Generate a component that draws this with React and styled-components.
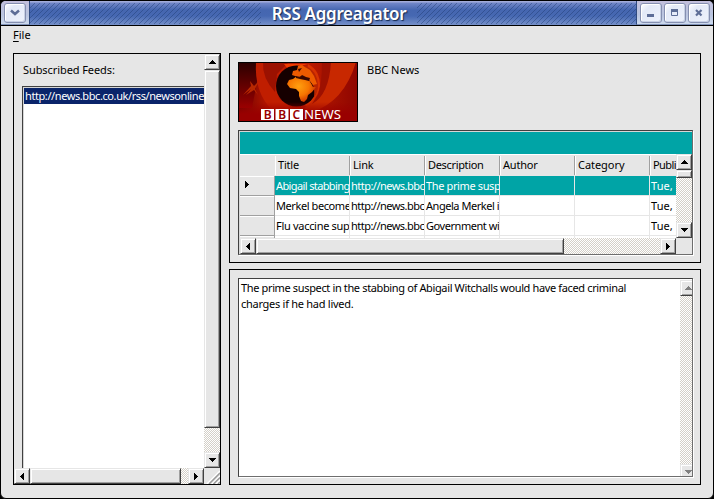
import React from 'react';
import styled, { createGlobalStyle, css } from 'styled-components';

const Global = createGlobalStyle`
  * { box-sizing: border-box; }
  body { margin: 0; background: #000; font: 11px/16px "Noto Sans", "Open Sans", sans-serif; color: #000; }
`;

const Window = styled.div`
  width: 714px; height: 499px; display: flex; flex-direction: column;
  background: #e6e6e6; border: 1px solid #000; border-radius: 6px; overflow: hidden;
`;
const TitleBar = styled.header`
  height: 25px; flex: none; display: flex; border-bottom: 1px solid #000;
  background: linear-gradient(#a3acd9 0 1px, #7186c8 2px, #4566b0 9px, #4668b2 15px, #7590c9 24px);
`;
const Stripe = styled.div`
  flex: ${p => (p.$w ? `0 0 ${p.$w}px` : 1)}; margin: 2px 0 1px;
  background: linear-gradient(135deg, #1d397070 0 10%, #0000 10% 50%, #1d397070 50% 60%, #0000 60%) 0 0 / 5px 5px;
`;
const TitleLabel = styled.h1`
  flex: none; margin: 0; width: 156px; text-align: center; color: #fff; white-space: nowrap;
  font: 600 17px/25px "Noto Sans", sans-serif; letter-spacing: -0.3px;
  text-shadow: 1px 1px 1px #14284f;
`;
const ButtonGroup = styled.div`
  display: flex; align-items: center; gap: 2px; height: 24px; flex: none;
  width: ${p => p.$w}px; padding-left: 3px; border-bottom: 1px solid #7f91b8;
  background: linear-gradient(#c3bfdc, #b9c4df 60%, #ccd9ed);
  ${p => (p.$right ? 'border-left' : 'border-right')}: 1px solid #2f4a80;
`;
const WinButton = styled.button`
  width: 22px; height: 20px; padding: 0; border: 1px solid #858fb0; border-radius: 3px;
  background: linear-gradient(135deg, #fff, #e3e9f7 30%, #eef2fc); box-shadow: inset 1px 1px #fff, inset -1px -1px #c7d0e4;
  display: flex; align-items: center; justify-content: center;
`;
const MenuBar = styled.nav`height: 27px; flex: none; padding: 1px 0 0 12px;`;
const Text = styled.span`
  display: block; white-space: pre; letter-spacing: ${p => p.$ls ?? -0.36}px;
  u { text-underline-offset: 2px; }
`;
const Main = styled.main`display: flex; gap: 8px; padding-left: 12px;`;
const Panel = styled.section`border: 1px solid #000; width: ${p => p.$w}px; height: ${p => p.$h}px; overflow: hidden;`;
const FeedPanel = styled(Panel)`display: grid; grid-template: 414px 16px / 190px 16px;`;
const FeedArea = styled.div`padding: 8px 0 0 8px; overflow: hidden; display: flex; flex-direction: column;`;
const FeedLabel = styled(Text)`margin: 0 0 8px 1px;`;
const FeedList = styled.div`
  flex: 1; background: #fff; border: solid #404040; border-width: 1px 0 0 1px;
  box-shadow: inset 1px 1px #d6d6d6; padding: 1px 0 0 1px;
`;
const FeedItem = styled.div`background: #0a246a; color: #fff; height: 16px; overflow: hidden; padding-left: 1px;`;
const RightColumn = styled.div`display: flex; flex-direction: column; gap: 6px;`;
const NewsPanel = styled(Panel)`padding: 8px;`;
const NewsHead = styled.div`display: flex; gap: 9px; height: 68px;`;

const raised = css`
  background: #e6e6e6; border: 1px solid; border-color: #e6e6e6 #404040 #404040 #e6e6e6;
  box-shadow: inset 1px 1px #fff, inset -1px -1px #a0a0a0;
`;
const track = 'repeating-conic-gradient(#d4d0c8 0 25%, #fff 0 50%) 0 0 / 2px 2px';
const Bar = styled.div`
  display: flex; flex-direction: ${p => (p.$v ? 'column' : 'row')}; overflow: hidden; background: ${track};
`;
const Arrow = styled.div`
  ${raised} width: 16px; height: 16px; flex: none; display: flex; align-items: center; justify-content: center;
`;
const Thumb = styled.div`${raised} flex: none; ${p => (p.$v ? 'height' : 'width')}: ${p => p.$s}px;`;
const Gap = styled.div`flex: 1;`;

const shapes = {
  up: 'M3 0h1v1h1v1h1v1h1v1H0V3h1V2h1V1h1z',
  down: 'M0 0h7v1H6v1H5v1H4v1H3V3H2V2H1V1H0z',
  left: 'M3 0h1v7H3V6H2V5H1V4H0V3h1V2h1V1h1z',
  right: 'M0 0h1v1h1v1h1v1h1v1H3v1H2v1H1v1H0z',
};
const Tri = ({ dir, color = '#000' }) => {
  const v = dir === 'up' || dir === 'down';
  return (
    <svg width={v ? 7 : 4} height={v ? 4 : 7} shapeRendering="crispEdges"><path d={shapes[dir]} fill={color} /></svg>
  );
};
const ScrollBar = ({ v, thumb }) => (
  <Bar $v={v}>
    <Arrow><Tri dir={v ? 'up' : 'left'} /></Arrow>
    <Thumb $v={v} $s={thumb} />
    <Gap />
    <Arrow><Tri dir={v ? 'down' : 'right'} /></Arrow>
  </Bar>
);

const Grid = styled.div`
  width: 455px; height: 125px; border: 1px solid #404040; border-right-color: #6e6e6e; border-bottom-color: #6e6e6e;
  padding: 1px 0 0 1px; box-shadow: inset 1px 1px #d6d6d6, 1px 1px #fff;
  display: grid; grid-template: 22px 84px 16px / 436px 16px;
`;
const Caption = styled.div`grid-column: 1 / 3; background: #00a4a6;`;
const GridBody = styled.div`background: #fff; overflow: hidden;`;
const Row = styled.div`
  display: grid; grid-template-columns: 35px repeat(5, 75px) 26px; height: ${p => (p.$head ? 22 : 20)}px;
  ${p => p.$head && 'background: #e6e6e6; border-top: 1px solid #fff;'}
`;
const HeadCell = styled.div`
  padding: 1px 0 0 3px; overflow: hidden; box-shadow: inset 1px 0 #fff; margin: 1px 0;
  &:not(:last-child) { border-right: 1px solid #a0a0a0; }
`;
const RowHead = styled.div`
  background: #e6e6e6; border: solid #a0a0a0; border-width: 0 1px 1px 0; box-shadow: inset 0 1px #fff;
  padding: 5px 0 0 5px; line-height: 0;
`;
const Cell = styled.div`
  border: solid #e6e6e6; border-width: 0 1px 1px 0; overflow: hidden; padding: 2px 0 0 1px;
  &:last-child { border-right: 0; }
  ${p => p.$on && 'background: #00a4a6; color: #fff;'}
`;
const DetailPanel = styled(Panel)`padding: 8px;`;
const Detail = styled.div`
  width: 455px; height: 199px; border: 1px solid #404040; border-right-color: #6e6e6e; border-bottom-color: #6e6e6e;
  background: #fff; box-shadow: 1px 1px #fff; display: grid; grid-template-columns: 441px 12px; overflow: hidden;
`;
const DetailText = styled.div`padding: 1px 0 0 2px;`;
const DetailBar = styled.div`
  display: grid; grid-template: 16px 1fr 12px / 16px; overflow: hidden; margin-top: 1px; background: ${track};
`;

const Logo = () => (
  <svg width="120" height="60" viewBox="0 0 120 60">
    <defs>
      <linearGradient id="sky" x2="1"><stop offset="0" stopColor="#6a0000" /><stop offset=".25" stopColor="#b51600" /><stop offset=".6" stopColor="#b81a00" /><stop offset="1" stopColor="#8e0500" /></linearGradient>
      <linearGradient id="dusk" x2="0" y2="1"><stop offset="0" stopColor="#2a0000" /><stop offset="1" stopColor="#900" /></linearGradient>
      <radialGradient id="land" cx=".4" cy=".4" r=".6"><stop offset="0" stopColor="#ffa010" /><stop offset=".6" stopColor="#f67500" /><stop offset="1" stopColor="#d03800" /></radialGradient>
      <linearGradient id="fade" x2="0" y2="1"><stop offset="0" stopColor="#900" stopOpacity="0" /><stop offset=".6" stopColor="#900" /></linearGradient>
    </defs>
    <rect width="120" height="60" fill="url(#sky)" />
    <path d="M0 0h19v20L14 46H0z" fill="url(#dusk)" />
    <path d="M18 0h34L38 16l3 21 16 11H34Q16 30 18 0z" fill="#c01e00" />
    <path d="M25 0h26L39 12l-2 18Q24 16 25 0z" fill="#8c0c00" opacity=".7" />
    <path d="M46 2h24L50 7z" fill="#f03c00" />
    <path d="M70 2q12 6 12 22-2 14-13 20l-6-2z" fill="#d83200" />
    <path d="M88 0h30Q106 40 74 50l-8-4Q84 36 88 0z" fill="#c82800" />
    <path d="M84 0h9Q91 33 74 42l6-10Q84 22 84 0z" fill="#9d1000" />
    <path d="M5 33l8-9-1-5 4 5 5-5-4 8 3 6-4-5-8 5 5-6z" fill="#b82800" />
    <circle cx="58.500" cy="24" r="20.500" fill="#160000" />
    <path d="M66 3q13 5 14 20 0 8-4 12 1-8-2-14l-2-8z" fill="#b82400" />
    <path d="M55 17l4-3 5 1 2 2 5 1 3 5 1 2h3l-4 5-4 3-1 4-3 3-3-1-2-5v-4l-3-3-6-1-3-4 2-4z" fill="url(#land)" />
    <path d="M54 13l1-4 4-1 1-4 4-1 3 2 5 3 4 6 3 8-4 1-4-5-4-1-3-3-4 1-3-1z" fill="#ed5b00" />
    <path d="M58 14l4 1 2-2 4 2 4 1-1 3-4-1-5-1-4-1zM60 7l4-1-3 4z" fill="#3a0800" />
    <rect y="40" width="120" height="20" fill="url(#fade)" />
    <g fill="#fff"><rect x="23" y="47" width="13" height="11" /><rect x="37.500" y="47" width="13" height="11" /><rect x="52" y="47" width="13" height="11" /></g>
    <g fontFamily="Noto Sans, sans-serif" fontSize="12" fontWeight="600">
      <g fill="#900"><text x="25.700" y="57">B</text><text x="40.200" y="57">B</text><text x="54.500" y="57">C</text></g>
      <text x="66" y="57" fill="#fff" fontSize="12.500" fontWeight="400" textLength="37" lengthAdjust="spacingAndGlyphs">NEWS</text>
    </g>
    <rect x=".5" y=".5" width="119" height="59" fill="none" stroke="#000" />
  </svg>
);
const Grip = () => (
  <svg width="16" height="16">
    <g strokeWidth="1.500"><path d="M3 16L16 3M8 16l8-8M12 16l4-4" stroke="#fff" /><path d="M5 16L16 5M9.500 16L16 9.500M14 16l2-2" stroke="#999" /></g>
  </svg>
);

const heads = ['Title', 'Link', 'Description', 'Author', 'Category', 'Publi'];
const rows = [
  ['Abigail stabbing', 'http://news.bbc', 'The prime susp', '', '', 'Tue,'],
  ['Merkel become', 'http://news.bbc', 'Angela Merkel i', '', '', 'Tue,'],
  ['Flu vaccine sup', 'http://news.bbc', 'Government wi', '', '', 'Tue,'],
  ['', '', '', '', '', ''],
];
const tracking = {
  'Abigail stabbing': -0.62, 'http://news.bbc': -0.52, 'The prime susp': -0.37, 'Merkel become': -0.42,
  'Angela Merkel i': -0.46, 'Government wi': -0.45, 'Flu vaccine sup': -0.3, 'Tue,': 0.1,
  Category: -0.05, Description: -0.33, Publi: -0.6,
};

export default function App() {
  return (
    <>
      <Global />
      <Window>
        <TitleBar>
          <ButtonGroup $w={29}>
            <WinButton><svg width="10" height="7"><path d="M1 1.500L5 5l4-3.500" fill="none" stroke="#5d6d97" strokeWidth="2.500" /></svg></WinButton>
          </ButtonGroup>
          <Stripe $w={231} />
          <TitleLabel>RSS Aggreagator</TitleLabel>
          <Stripe />
          <ButtonGroup $w={77} $right>
            <WinButton><svg width="8" height="8"><path d="M0 5h7v3H0z" fill="#5d6d97" /></svg></WinButton>
            <WinButton><svg width="8" height="8"><path d="M.5 1h6v5.500h-6z" fill="none" stroke="#5d6d97" /><path d="M0 0h7v3H0z" fill="#5d6d97" /></svg></WinButton>
            <WinButton><svg width="8" height="8"><path d="M1 1l5.500 5.500M6.500 1L1 6.500" stroke="#5d6d97" strokeWidth="2.200" /></svg></WinButton>
          </ButtonGroup>
        </TitleBar>
        <MenuBar><Text $ls={0}><u>F</u>ile</Text></MenuBar>
        <Main>
          <FeedPanel $w={208} $h={432}>
            <FeedArea>
              <FeedLabel $ls={-0.08}>Subscribed Feeds:</FeedLabel>
              <FeedList><FeedItem><Text $ls={-0.41}>http://news.bbc.co.uk/rss/newsonline</Text></FeedItem></FeedList>
            </FeedArea>
            <ScrollBar v thumb={358} />
            <ScrollBar thumb={151} />
            <Grip />
          </FeedPanel>
          <RightColumn>
            <NewsPanel $w={472} $h={210}>
              <NewsHead><Logo /><Text $ls={0}>BBC News</Text></NewsHead>
              <Grid>
                <Caption />
                <GridBody>
                  <Row $head><span />{heads.map(h => <HeadCell key={h}><Text $ls={tracking[h] ?? -0.2}>{h}</Text></HeadCell>)}</Row>
                  {rows.map((r, i) => (
                    <Row key={i}>
                      <RowHead>{i === 0 && <Tri dir="right" />}</RowHead>
                      {r.map((c, j) => <Cell key={j} $on={i === 0}><Text $ls={tracking[c]}>{c}</Text></Cell>)}
                    </Row>
                  ))}
                </GridBody>
                <ScrollBar v thumb={8} />
                <ScrollBar thumb={308} />
              </Grid>
            </NewsPanel>
            <DetailPanel $w={472} $h={216}>
              <Detail>
                <DetailText>
                  <Text>The prime suspect in the stabbing of Abigail Witchalls would have faced criminal</Text>
                  <Text $ls={-0.27}>charges if he had lived.</Text>
                </DetailText>
                <DetailBar>
                  <Arrow><Tri dir="up" color="#808080" /></Arrow><Gap /><Arrow><Tri dir="down" color="#808080" /></Arrow>
                </DetailBar>
              </Detail>
            </DetailPanel>
          </RightColumn>
        </Main>
      </Window>
    </>
  );
}
